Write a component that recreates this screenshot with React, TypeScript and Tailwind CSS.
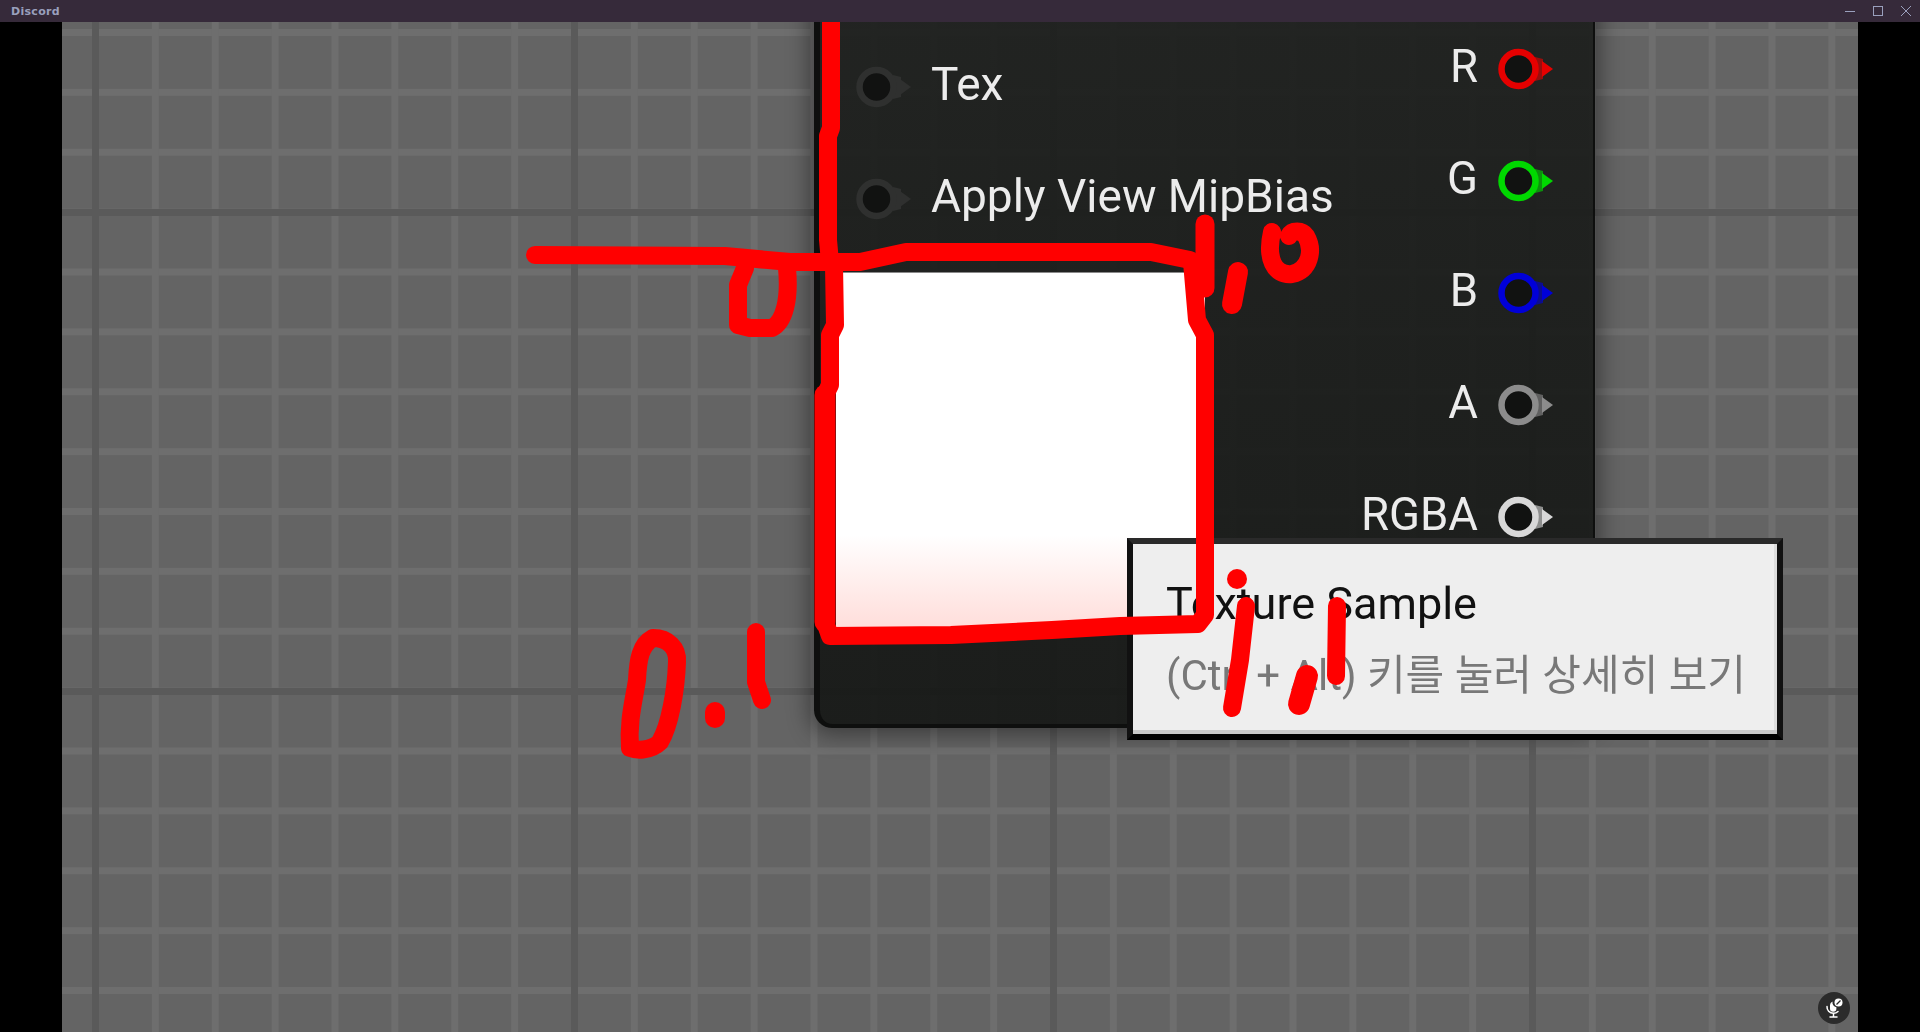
const GRID_STEP = 59.875;

function GridLines() {
  const cols = Array.from({ length: 32 }, (_, i) => i);
  const rows = Array.from({ length: 18 }, (_, i) => i);
  // canvas starts at x=62 y=22, first heavy lines sit at x=92 and y=209
  return (
    <svg className="absolute inset-0 w-full h-full" aria-hidden="true">
      <rect width="100%" height="100%" fill="#646464" />
      {rows.map((r) => (
        <rect key={"h" + r} x="0" y={7 + (r * GRID_STEP)} width="1798" height="7" fill="#6e6e6e" />
      ))}
      {cols.map((c) => (
        <rect key={"v" + c} x={30 + (c * GRID_STEP)} y="0" width="7" height="1010" fill="#6e6e6e" />
      ))}
      {[187, 666].map((y) => (
        <rect key={y} x="0" y={y} width="1798" height="7" fill="#5a5a5a" />
      ))}
      {[30, 509, 988, 1467].map((x) => (
        <rect key={x} x={x} y="0" width="7" height="1010" fill="#5a5a5a" />
      ))}
    </svg>
  );
}

function Pin({ color, dim }: { color: string; dim?: boolean }) {
  return (
    <svg width="56" height="42" viewBox="0 0 56 42" className="shrink-0 blur-[0.5px]">
      <polygon points="37,9 45,11 45,31 37,33" fill={color} opacity={dim ? 1 : 0.6} />
      <polygon points="44,13 55,21 44,29" fill={color} />
      <circle cx="20.5" cy="21" r="17" fill="#111211" stroke={color} strokeWidth="6.5" />
    </svg>
  );
}

function InputRow({ label }: { label: string }) {
  return (
    <div className="h-[112px] pl-[20px] flex items-center gap-[19px]">
      <Pin color="#2f302f" dim />
      <span className="pb-[7px] text-[46px] leading-none text-[#ececec] whitespace-nowrap blur-[0.6px]">{label}</span>
    </div>
  );
}

function OutputRow({ label, color }: { label: string; color: string }) {
  return (
    <div className="h-[112px] flex items-center justify-end gap-[20px]">
      <span className="pb-[5px] text-[45.500px] leading-none text-[#ececec] whitespace-nowrap blur-[0.6px]">{label}</span>
      <Pin color={color} />
    </div>
  );
}

function MicBadge() {
  return (
    <div className="absolute left-[1756px] top-[970px] w-8 h-8 rounded-full bg-[#2b2b2b] flex items-center justify-center">
      <svg width="22" height="22" viewBox="0 0 22 22" fill="none">
        <path d="M9.5 4.5a4 4 0 0 0-2.5 3.6v3.4a3.2 3.2 0 0 0 6.4 0v-1.2a5 5 0 0 1-3.9-5.800z" fill="#fff" />
        <path d="M4 9.500c-.3 3.600 2.500 6.800 6.500 6.800 1.800 0 3.400-.7 4.500-1.800" stroke="#fff" strokeWidth="1.500" strokeLinecap="round" />
        <path d="M10.500 16.500v3M7 20h7" stroke="#fff" strokeWidth="1.500" strokeLinecap="round" />
        <circle cx="15.500" cy="5.500" r="4" fill="#fff" />
        <path d="M13.500 7.500l4-4" stroke="#2b2b2b" strokeWidth="1.300" />
      </svg>
    </div>
  );
}

// hand drawn annotation, coordinates are page pixels so the svg is pulled back by the canvas offset
function Scribbles() {
  return (
    <svg className="absolute left-[-62px] top-[-22px] w-[1920px] h-[1032px] pointer-events-none" viewBox="0 0 1920 1032" fill="none" stroke="#ff0000" strokeWidth="18" strokeLinecap="round" strokeLinejoin="round">
      <path d="M831 10 L831 128 L828 136 L828 240 L830 262" />
      <path d="M535 255 L725 256 L790 262 L860 262 L906 252 L1151 252 L1190 260" />
      <path d="M745 268 L738 285 L738 325 L750 328 L772 328 C784 322 790 300 787 268" />
      <path d="M834 265 L835 325 L830 335 L830 385 L825 395 L825 622 L830 636 L951 635 L1052 630 L1120 626 L1198 624 L1205 615 L1205 335 L1197 320 L1192 262" />
      <path d="M825 395 L825 622" strokeWidth="21" />
      <path d="M1205 224 L1205 288" strokeWidth="19" />
      <path d="M1238 272 L1232 304" strokeWidth="20" />
      <path d="M1272 232 C1266 258 1274 276 1292 274 C1310 270 1314 250 1306 236 C1302 230 1292 230 1289 236" />
      <path d="M653 638 C668 638 678 648 677 662 C676 690 670 725 660 742 C650 752 635 750 630 748 C628 720 634 700 637 680 C638 660 640 645 653 638 Z" />
      <path d="M715 712 L715 718" strokeWidth="20" />
      <path d="M756 632 L756 682 L762 700" />
      <path d="M1237 579 L1237 579" strokeWidth="20" />
      <path d="M1246 606 L1240 660 L1232 708" />
      <path d="M1307 676 L1299 704" strokeWidth="22" />
      <path d="M1337 606 L1336 676" />
    </svg>
  );
}

export default function App() {
  return (
    <div className="relative w-[1920px] h-[1032px] flex flex-col overflow-hidden bg-black font-['Roboto',sans-serif]">
      {/* window title bar */}
      <div className="h-[22px] shrink-0 bg-[#362a3a] flex items-center justify-between pl-[11px] pr-[9px] text-[#9aa0bd]">
        <span className="font-['DejaVu_Sans',sans-serif] font-bold text-[11px] tracking-[0.3px] leading-none">Discord</span>
        <div className="flex items-center gap-[18px]">
          <svg width="10" height="10" viewBox="0 0 10 10"><path d="M0 5.500h10" stroke="currentColor" /></svg>
          <svg width="10" height="10" viewBox="0 0 10 10" fill="none"><rect x="0.500" y="0.500" width="9" height="9" stroke="currentColor" /></svg>
          <svg width="10" height="10" viewBox="0 0 10 10"><path d="M0 0l10 10M10 0L0 10" stroke="currentColor" /></svg>
        </div>
      </div>

      <div className="flex-1 flex min-h-0">
        <div className="w-[62px] shrink-0 bg-black" />
        <div className="relative flex-1 overflow-hidden">
          <GridLines />

          {/* material node */}
          <div className="absolute left-[752px] top-[-20px] w-[781px] h-[726px] flex justify-between pl-[16px] pr-[39px] rounded-b-[18px] border-l-[6px] border-r-2 border-b-4 border-[#0e0f0e] bg-gradient-to-b from-[#1c1e1ceb] to-[#151715eb] shadow-[0_2px_22px_5px_rgba(0,0,0,0.4)]">
            <div className="flex flex-col pt-[29px]">
              <InputRow label="Tex" />
              <InputRow label="Apply View MipBias" />
              <div className="mt-[17px] w-[369px] h-[355px] border-t border-[#8a8a8a] bg-gradient-to-b from-white from-[74%] to-[#ffdedb]" />
            </div>
            <div className="flex flex-col pt-[11px]">
              <OutputRow label="R" color="#e60000" />
              <OutputRow label="G" color="#00d800" />
              <OutputRow label="B" color="#0000d8" />
              <OutputRow label="A" color="#8c8c8c" />
              <OutputRow label="RGBA" color="#d8d8d8" />
            </div>
          </div>

          {/* tooltip */}
          <div className="absolute left-[1065px] top-[516px] w-[656px] h-[202px] border-[6px] border-t-[#2a2a2a] border-x-[#111111] border-b-black bg-[#eeeeee] shadow-[inset_0_-4px_0_#c8c8c8,inset_-3px_0_0_#dddddd] pl-[33px] pt-[32px]">
            <p className="text-[45px] leading-[56px] text-[#111] whitespace-nowrap blur-[0.4px]">Texture Sample</p>
            <p className="mt-[16px] font-['Roboto','Noto_Sans_CJK_KR',sans-serif] text-[42px] leading-[56px] text-[#787878] whitespace-nowrap blur-[0.4px]">(Ctrl + Alt) 키를 눌러 상세히 보기</p>
          </div>

          <MicBadge />
          <Scribbles />
        </div>
        <div className="w-[62px] shrink-0 bg-black" />
      </div>
    </div>
  );
}
